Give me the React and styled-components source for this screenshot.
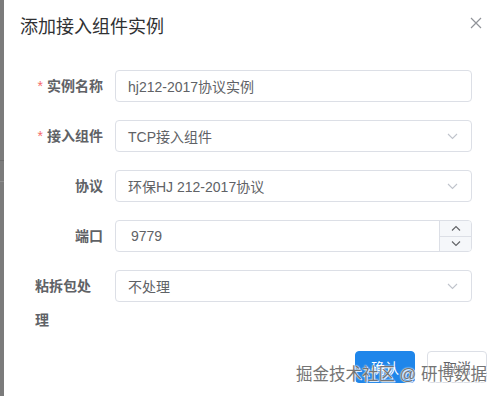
import React from "react";
import styled, { createGlobalStyle } from "styled-components";

const GlobalStyle = createGlobalStyle`
  html, body {
    margin: 0;
    padding: 0;
    background: #ffffff;
  }
  body {
    font-family: "Liberation Sans", "Noto Sans CJK SC", sans-serif;
    width: 502px;
    height: 396px;
    overflow: hidden;
  }
`;

const Page = styled.div`
  display: flex;
  width: 502px;
  height: 396px;
  position: relative;
  overflow: hidden;
`;

const Mask = styled.div`
  width: 4px;
  flex-shrink: 0;
  background: #7b7b7b;
  display: flex;
  flex-direction: column;
  padding-top: 160px;
  gap: 20px;
`;

const MaskLine = styled.div`
  height: 1px;
  background: ${(p) => (p.light ? "#8e8e8e" : "#6c6c6c")};
`;

const Dialog = styled.div`
  flex: 1;
  background: #ffffff;
  display: flex;
  flex-direction: column;
`;

const Header = styled.div`
  display: flex;
  justify-content: space-between;
  align-items: flex-start;
  padding: 15px 16px 0 16px;
  height: 55px;
  box-sizing: border-box;
`;

const Title = styled.div`
  font-size: 18px;
  line-height: 24px;
  color: #303133;
`;

const Close = styled.div`
  width: 12px;
  height: 12px;
  margin-top: 2px;
  margin-right: 4px;
  color: #909399;
  display: flex;
`;

const Form = styled.div`
  display: flex;
  flex-direction: column;
  padding: 15px 30px 0 31px;
`;

const Row = styled.div`
  display: flex;
  align-items: flex-start;
  margin-bottom: 18px;
`;

const Label = styled.div`
  width: 80px;
  flex-shrink: 0;
  box-sizing: border-box;
  padding-right: 12px;
  text-align: ${(p) => (p.wrap ? "left" : "right")};
  font-size: 14px;
  font-weight: bold;
  color: #606266;
  line-height: ${(p) => (p.wrap ? "34px" : "32px")};
  margin-top: ${(p) => (p.wrap ? "-1px" : "0")};
`;

const Star = styled.span`
  color: #f56c6c;
  margin-right: 4px;
  font-weight: normal;
`;

const Field = styled.div`
  flex: 1;
  height: 32px;
  box-sizing: border-box;
  border: 1px solid #dcdfe6;
  border-radius: 4px;
  display: flex;
  align-items: center;
  overflow: hidden;
`;

const Value = styled.div`
  flex: 1;
  padding-left: ${(p) => p.pad || 12}px;
  font-size: 14px;
  color: #606266;
  white-space: nowrap;
`;

const Arrow = styled.div`
  width: 30px;
  display: flex;
  justify-content: center;
  margin-right: 4px;
  color: #c0c4cc;
`;

const Stepper = styled.div`
  width: 31px;
  height: 100%;
  display: flex;
  flex-direction: column;
  border-left: 1px solid #dcdfe6;
  background: #f5f7fa;
`;

const Step = styled.div`
  flex: 1;
  display: flex;
  align-items: center;
  justify-content: center;
  color: #606266;
  border-top: ${(p) => (p.bottom ? "1px solid #dcdfe6" : "none")};
`;

const Footer = styled.div`
  display: flex;
  justify-content: flex-end;
  gap: 12px;
  padding: 0 15px 0 0;
  margin-top: -4px;
`;

const Button = styled.div`
  width: 60px;
  height: 32px;
  box-sizing: border-box;
  border-radius: 4px;
  display: flex;
  align-items: center;
  justify-content: center;
  font-size: 14px;
  background: ${(p) => (p.primary ? "#1f86ea" : "#ffffff")};
  color: ${(p) => (p.primary ? "#ffffff" : "#606266")};
  border: 1px solid ${(p) => (p.primary ? "#1f86ea" : "#dcdfe6")};
`;

const Watermark = styled.div`
  position: absolute;
  left: 296px;
  top: 363px;
  font-size: 16.5px;
  line-height: 22px;
  color: #747474;
  white-space: nowrap;
  text-shadow: 0 0 2px #ffffff, 0 0 1px #ffffff, 1px 1px 0 rgba(255, 255, 255, 0.8);
`;

const Chevron = ({ up }) => (
  <svg width="11" height="7" viewBox="0 0 11 7" fill="none">
    <path
      d={up ? "M1 6 L5.5 1.5 L10 6" : "M1 1 L5.5 5.5 L10 1"}
      stroke="currentColor"
      strokeWidth="1.1"
    />
  </svg>
);

const SmallChevron = ({ up }) => (
  <svg width="10" height="6" viewBox="0 0 10 6" fill="none">
    <path
      d={up ? "M1 5.5 L5 1.5 L9 5.5" : "M1 0.5 L5 4.5 L9 0.5"}
      stroke="currentColor"
      strokeWidth="1.1"
    />
  </svg>
);

const SelectField = ({ value }) => (
  <Field>
    <Value>{value}</Value>
    <Arrow>
      <Chevron />
    </Arrow>
  </Field>
);

const App = () => {
  return (
    <Page>
      <GlobalStyle />
      <Mask>
        <MaskLine />
        <MaskLine light />
      </Mask>
      <Dialog>
        <Header>
          <Title>添加接入组件实例</Title>
          <Close>
            <svg width="12" height="12" viewBox="0 0 12 12">
              <path d="M1 1 L11 11 M11 1 L1 11" stroke="currentColor" strokeWidth="1.2" />
            </svg>
          </Close>
        </Header>
        <Form>
          <Row>
            <Label>
              <Star>*</Star>实例名称
            </Label>
            <Field>
              <Value>hj212-2017协议实例</Value>
            </Field>
          </Row>
          <Row>
            <Label>
              <Star>*</Star>接入组件
            </Label>
            <SelectField value="TCP接入组件" />
          </Row>
          <Row>
            <Label>协议</Label>
            <SelectField value="环保HJ 212-2017协议" />
          </Row>
          <Row>
            <Label>端口</Label>
            <Field>
              <Value pad={15}>9779</Value>
              <Stepper>
                <Step>
                  <SmallChevron up />
                </Step>
                <Step bottom>
                  <SmallChevron />
                </Step>
              </Stepper>
            </Field>
          </Row>
          <Row>
            <Label wrap>粘拆包处理</Label>
            <SelectField value="不处理" />
          </Row>
        </Form>
        <Footer>
          <Button primary>确认</Button>
          <Button>取消</Button>
        </Footer>
      </Dialog>
      <Watermark>掘金技术社区 @ 研博数据</Watermark>
    </Page>
  );
};

export default App;
